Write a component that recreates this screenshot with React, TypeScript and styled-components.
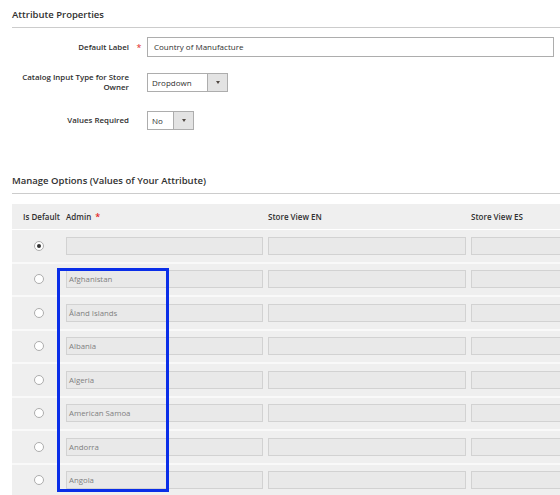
import React from "react";
import styled, { createGlobalStyle } from "styled-components";

const GlobalStyle = createGlobalStyle`
  html, body {
    margin: 0;
    padding: 0;
    background: #ffffff;
    overflow: hidden;
  }
  body {
    font-family: "Open Sans", "Liberation Sans", sans-serif;
    color: #303030;
    width: 560px;
    height: 495px;
  }
`;

const Page = styled.div`
  width: 560px;
  height: 495px;
  overflow: hidden;
`;

const Section = styled.section<{ $top: number }>`
  padding: ${(p) => p.$top}px 0 0 12px;
`;

const SectionTitle = styled.h2`
  margin: 0;
  font-size: 9.5px;
  font-weight: 600;
  line-height: 14px;
  color: #303030;
  padding-bottom: 5px;
  border-bottom: 1px solid #cccccc;
`;

const FormRows = styled.div`
  display: flex;
  flex-direction: column;
  padding-top: 9px;
  gap: 15px;
`;

const FormRow = styled.div<{ $extra?: number }>`
  display: grid;
  grid-template-columns: 117px 18px 1fr;
  align-items: center;
  min-height: 20px;
  margin-top: ${(p) => p.$extra ?? 0}px;
`;

const Label = styled.label`
  text-align: right;
  font-size: 7.9px;
  font-weight: 600;
  line-height: 10px;
  color: #303030;
`;

const Star = styled.span<{ $gap?: number }>`
  color: #e22626;
  font-size: 9px;
  text-align: center;
  padding-left: ${(p) => p.$gap ?? 2}px;
`;

const TextInput = styled.div`
  height: 18px;
  border: 1px solid #adadad;
  background: #fff;
  font-size: 8px;
  line-height: 18px;
  padding-left: 6px;
  color: #303030;
  margin-right: 6px;
`;

const Select = styled.div<{ $width: number }>`
  width: ${(p) => p.$width}px;
  height: 17px;
  border: 1px solid #adadad;
  display: flex;
  background: #fff;
`;

const SelectValue = styled.span`
  flex: 1;
  font-size: 8px;
  line-height: 17px;
  padding-left: 4px;
`;

const SelectArrow = styled.span`
  width: 19px;
  background: #e3e3e3;
  border-left: 1px solid #adadad;
  display: flex;
  align-items: center;
  justify-content: center;
  &::after {
    content: "";
    border-left: 2px solid transparent;
    border-right: 2px solid transparent;
    border-top: 3px solid #514943;
  }
`;

const Table = styled.div`
  margin-top: 10px;
  position: relative;
  display: grid;
  grid-template-columns: 50px 202px 203px 203px;
  width: 658px;
`;

const HeadCell = styled.div<{ $pad?: number }>`
  background: #efefef;
  height: 25px;
  display: flex;
  align-items: center;
  font-size: 8px;
  font-weight: 600;
  padding-left: ${(p) => p.$pad ?? 4}px;
  margin-bottom: 1px;
`;

const Cell = styled.div`
  background: #efefef;
  height: 31.5px;
  display: flex;
  align-items: center;
  padding-left: 4px;
  border-bottom: 2px solid #f9f9f9;
`;

const RadioCell = styled(Cell)`
  justify-content: center;
  padding-left: 4px;
`;

const Radio = styled.span<{ $checked?: boolean }>`
  width: 8px;
  height: 8px;
  border-radius: 50%;
  border: 1px solid #adadad;
  background: #fff;
  display: flex;
  align-items: center;
  justify-content: center;
  &::after {
    content: "";
    width: 4px;
    height: 4px;
    border-radius: 50%;
    background: ${(p) => (p.$checked ? "#333" : "transparent")};
  }
`;

const OptionInput = styled.div`
  flex: 1;
  height: 16px;
  margin-right: 1px;
  border: 1px solid #d2d2d2;
  background: #e9e9e9;
  font-size: 7.8px;
  color: #808080;
  line-height: 16px;
  padding-left: 2px;
`;

const Highlight = styled.div`
  position: absolute;
  left: 45px;
  top: 64px;
  width: 106px;
  height: 218px;
  border: 3px solid #0a2ee8;
  pointer-events: none;
`;

const options = [
  "",
  "Afghanistan",
  "Åland Islands",
  "Albania",
  "Algeria",
  "American Samoa",
  "Andorra",
  "Angola",
];

export default function App() {
  return (
    <Page>
      <GlobalStyle />
      <Section $top={8}>
        <SectionTitle>Attribute Properties</SectionTitle>
        <FormRows>
          <FormRow>
            <Label>Default Label</Label>
            <Star>*</Star>
            <TextInput>Country of Manufacture</TextInput>
          </FormRow>
          <FormRow>
            <Label>
              Catalog Input Type for Store
              <br />
              Owner
            </Label>
            <span />
            <Select $width={79}>
              <SelectValue>Dropdown</SelectValue>
              <SelectArrow />
            </Select>
          </FormRow>
          <FormRow $extra={3}>
            <Label>Values Required</Label>
            <span />
            <Select $width={45}>
              <SelectValue>No</SelectValue>
              <SelectArrow />
            </Select>
          </FormRow>
        </FormRows>
      </Section>
      <Section $top={44}>
        <SectionTitle>Manage Options (Values of Your Attribute)</SectionTitle>
        <Table>
          <HeadCell $pad={11}>Is Default</HeadCell>
          <HeadCell>
            Admin<Star $gap={4}>*</Star>
          </HeadCell>
          <HeadCell>Store View EN</HeadCell>
          <HeadCell>Store View ES</HeadCell>
          {options.map((name, i) => (
            <React.Fragment key={i}>
              <RadioCell>
                <Radio $checked={i === 0} />
              </RadioCell>
              <Cell>
                <OptionInput>{name}</OptionInput>
              </Cell>
              <Cell>
                <OptionInput />
              </Cell>
              <Cell>
                <OptionInput />
              </Cell>
            </React.Fragment>
          ))}
          <Highlight />
        </Table>
      </Section>
    </Page>
  );
}
